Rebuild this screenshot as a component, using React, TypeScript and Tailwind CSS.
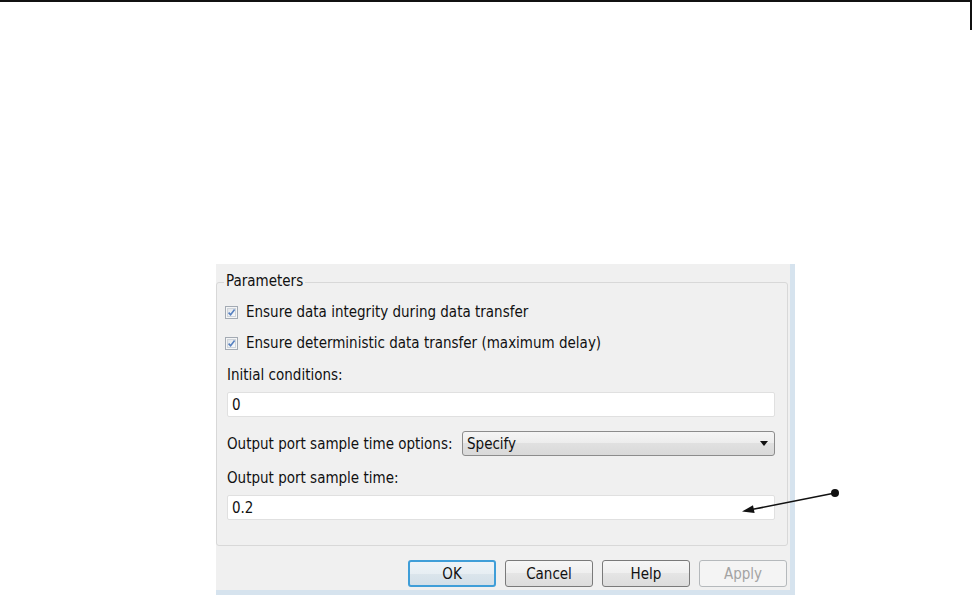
import React from "react";

function Check() {
  return (
    <svg width="13" height="13" viewBox="0 0 13 13" className="shrink-0">
      <defs>
        <linearGradient id="cbg" x1="0" y1="0" x2="1" y2="1">
          <stop offset="0" stopColor="#dfe3e8" />
          <stop offset="1" stopColor="#fafbfc" />
        </linearGradient>
      </defs>
      <rect x="0.5" y="0.5" width="12" height="12" fill="#f4f5f6" stroke="#a3aab3" />
      <rect x="2.5" y="2.5" width="8" height="8" fill="url(#cbg)" stroke="#cfd4da" />
      <path d="M3.6 6.6 L5.6 8.8 L9.6 3.6" fill="none" stroke="#5680c0" strokeWidth="1.6" />
    </svg>
  );
}

function Btn({ label, variant }: { label: string; variant?: "ok" | "off" }) {
  if (variant === "ok")
    return (
      <div className="w-[88px] h-[27px] rounded-[3px] border-2 border-[#3f9ed8] bg-[linear-gradient(#eef3f7,#e7eef3_50%,#dbe5ec_50%,#d3dfe8)] flex items-center justify-center">
        {label}
      </div>
    );
  if (variant === "off")
    return (
      <div className="w-[88px] h-[27px] rounded-[3px] border border-[#b5b9bc] bg-[#f4f4f4] text-[#a3a3a3] flex items-center justify-center">
        {label}
      </div>
    );
  return (
    <div className="w-[88px] h-[27px] rounded-[3px] border border-[#7a7a7a] bg-[linear-gradient(#f6f6f6,#efefef_50%,#e5e5e5_50%,#dcdcdc)] flex items-center justify-center">
      {label}
    </div>
  );
}

export default function App() {
  return (
    <div className="relative w-[973px] h-[595px] overflow-hidden bg-white text-[15px] leading-[18px] text-[#111] font-[family-name:'DejaVu_Sans_Condensed','DejaVu_Sans',sans-serif] font-stretch-semi-condensed">
      <div className="w-[972px] h-[30px] border-t-2 border-r-2 border-[#111]" />

      <div className="ml-[216px] mt-[234px] w-[579px] h-[331px] bg-[#f0f0f0] border-r-[5px] border-b-[5px] border-[#d6e3ee] flex flex-col">
        <div className="relative mt-[18px] w-[572px] h-[264px] border border-[#d8d8d8] rounded-[3px] pl-[8px] pr-[12px] pt-[17px] flex flex-col">
          <div className="absolute top-[-11px] left-[7px] px-[2px] bg-[#f0f0f0]">Parameters</div>

          <div className="flex items-center h-[24px] gap-[8px]">
            <Check />
            <span>Ensure data integrity during data transfer</span>
          </div>
          <div className="flex items-center h-[24px] gap-[8px] mt-[7px]">
            <Check />
            <span>Ensure deterministic data transfer (maximum delay)</span>
          </div>

          <div className="ml-[2px] mt-[10px] h-[20px] flex items-center">Initial conditions:</div>
          <div className="ml-[2px] mt-[7px] h-[25px] bg-white border border-[#e0e0e0] rounded-[2px] flex items-center pl-[4px]">0</div>

          <div className="ml-[2px] mt-[14px] h-[25px] flex items-center">
            <span>Output port sample time options:</span>
            <div className="ml-auto w-[313px] h-[25px] border border-[#8c8c8c] rounded-[3px] bg-[linear-gradient(#f5f5f5,#ececec_50%,#e0e0e0_50%,#d9d9d9)] flex items-center justify-between pl-[4px] pr-[6px]">
              <span>Specify</span>
              <svg width="8" height="5" viewBox="0 0 8 5">
                <polygon points="0,0 8,0 4,5" fill="#111" />
              </svg>
            </div>
          </div>

          <div className="ml-[2px] mt-[12px] h-[20px] flex items-center">Output port sample time:</div>
          <div className="ml-[2px] mt-[7px] h-[25px] bg-white border border-[#e0e0e0] rounded-[2px] flex items-center pl-[4px]">0.2</div>
        </div>

        <div className="mt-[14px] flex justify-end gap-[9px] pr-[3px]">
          <Btn label="OK" variant="ok" />
          <Btn label="Cancel" />
          <Btn label="Help" />
          <Btn label="Apply" variant="off" />
        </div>
      </div>

      <svg className="absolute left-0 top-0 pointer-events-none" width="973" height="595" viewBox="0 0 973 595">
        <line x1="835" y1="493" x2="753" y2="509.3" stroke="#111" strokeWidth="1.6" />
        <polygon points="742,511.5 754.6,513.1 753,505.3" fill="#111" />
        <circle cx="835" cy="493" r="4" fill="#111" />
      </svg>
    </div>
  );
}
